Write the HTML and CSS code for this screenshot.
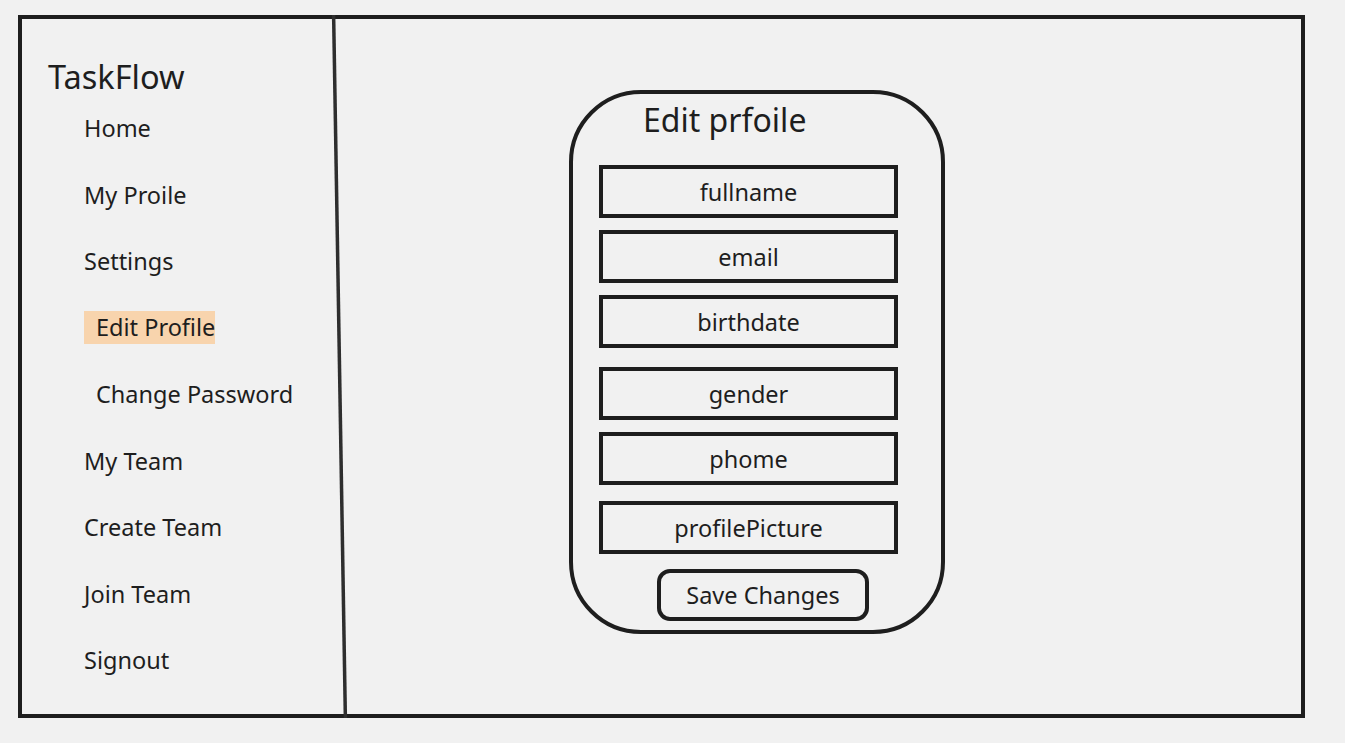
FILE: index.html
```html
<!DOCTYPE html>
<html lang="en">
<head>
  <meta charset="UTF-8">
  <meta name="viewport" content="width=device-width, initial-scale=1.0">
  <title>TaskFlow - Edit Profile</title>
  <link rel="stylesheet" href="styles.css">
</head>
<body>
  <div class="frame">
    <div class="sidebar">
      <div class="brand">TaskFlow</div>
      <div class="nav">
        <div class="nav-item">Home</div>
        <div class="nav-item">My Proile</div>
        <div class="nav-item">Settings</div>
        <div class="nav-item sub active">Edit Profile</div>
        <div class="nav-item sub">Change Password</div>
        <div class="nav-item">My Team</div>
        <div class="nav-item">Create Team</div>
        <div class="nav-item">Join Team</div>
        <div class="nav-item">Signout</div>
      </div>
    </div>

    <!-- hand drawn divider -->
    <div class="divider">
      <svg viewBox="0 0 18 100" preserveAspectRatio="none">
        <line x1="2.5" y1="-1" x2="14.5" y2="101" vector-effect="non-scaling-stroke" />
      </svg>
    </div>

    <div class="main">
      <div class="card">
        <div class="card-title">Edit prfoile</div>
        <div class="fields">
          <div class="field">fullname</div>
          <div class="field">email</div>
          <div class="field">birthdate</div>
          <div class="field spaced">gender</div>
          <div class="field">phome</div>
          <div class="field loose">profilePicture</div>
        </div>
        <button class="save-btn">Save Changes</button>
      </div>
    </div>
  </div>
</body>
</html>
```

FILE: styles.css
```css
body {
  margin: 0;
  padding: 0;
  background: #f1f1f1;
  font-family: "Noto Sans", "Open Sans", sans-serif;
  color: #1e1e1e;
}

.frame {
  box-sizing: border-box;
  width: 1287px;
  height: 703px;
  margin: 15px 0 0 18px;
  border: 4px solid #1e1e1e;
  display: flex;
}

/* Sidebar */
.sidebar {
  width: 309px;
  flex-shrink: 0;
  padding: 38px 0 0 26px;
  box-sizing: border-box;
}

.brand {
  font-size: 32.5px;
  line-height: 40px;
}

.nav {
  display: flex;
  flex-direction: column;
  align-items: flex-start;
  gap: 32.5px;
  margin: 14px 0 0 36px;
}

.nav-item {
  font-size: 23.5px;
  line-height: 34px;
}

.nav-item.sub {
  padding-left: 12px;
}

.nav-item.active {
  background: #f8d4ad;
  line-height: 33px;
  margin-bottom: 1px;
}

.divider {
  width: 18px;
  flex-shrink: 0;
  margin: -4px 0;
}

.divider svg {
  display: block;
  width: 100%;
  height: 100%;
}

.divider line {
  stroke: #2e2e2e;
  stroke-width: 3.5;
}

/* Main area */
.main {
  flex-grow: 1;
  padding: 71px 0 0 220px;
}

.card {
  box-sizing: border-box;
  width: 376px;
  height: 544px;
  border: 4px solid #1e1e1e;
  border-radius: 72px;
  padding-top: 6px;
}

.card-title {
  font-size: 32px;
  line-height: 40px;
  margin-left: 70px;
}

.fields {
  display: flex;
  flex-direction: column;
  gap: 12px;
  margin: 25px 0 0 26px;
}

.field {
  box-sizing: border-box;
  width: 299px;
  height: 53px;
  border: 4px solid #1e1e1e;
  display: flex;
  align-items: center;
  justify-content: center;
  font-size: 23.5px;
}

.field.spaced {
  margin-top: 7px;
}

.field.loose {
  margin-top: 4px;
}

.save-btn {
  display: flex;
  align-items: center;
  justify-content: center;
  box-sizing: border-box;
  width: 212px;
  height: 52px;
  margin: 15px 0 0 84px;
  border: 4px solid #1e1e1e;
  border-radius: 13px;
  background: transparent;
  font-family: inherit;
  font-size: 23.5px;
  color: #1e1e1e;
  padding: 0;
}
```
